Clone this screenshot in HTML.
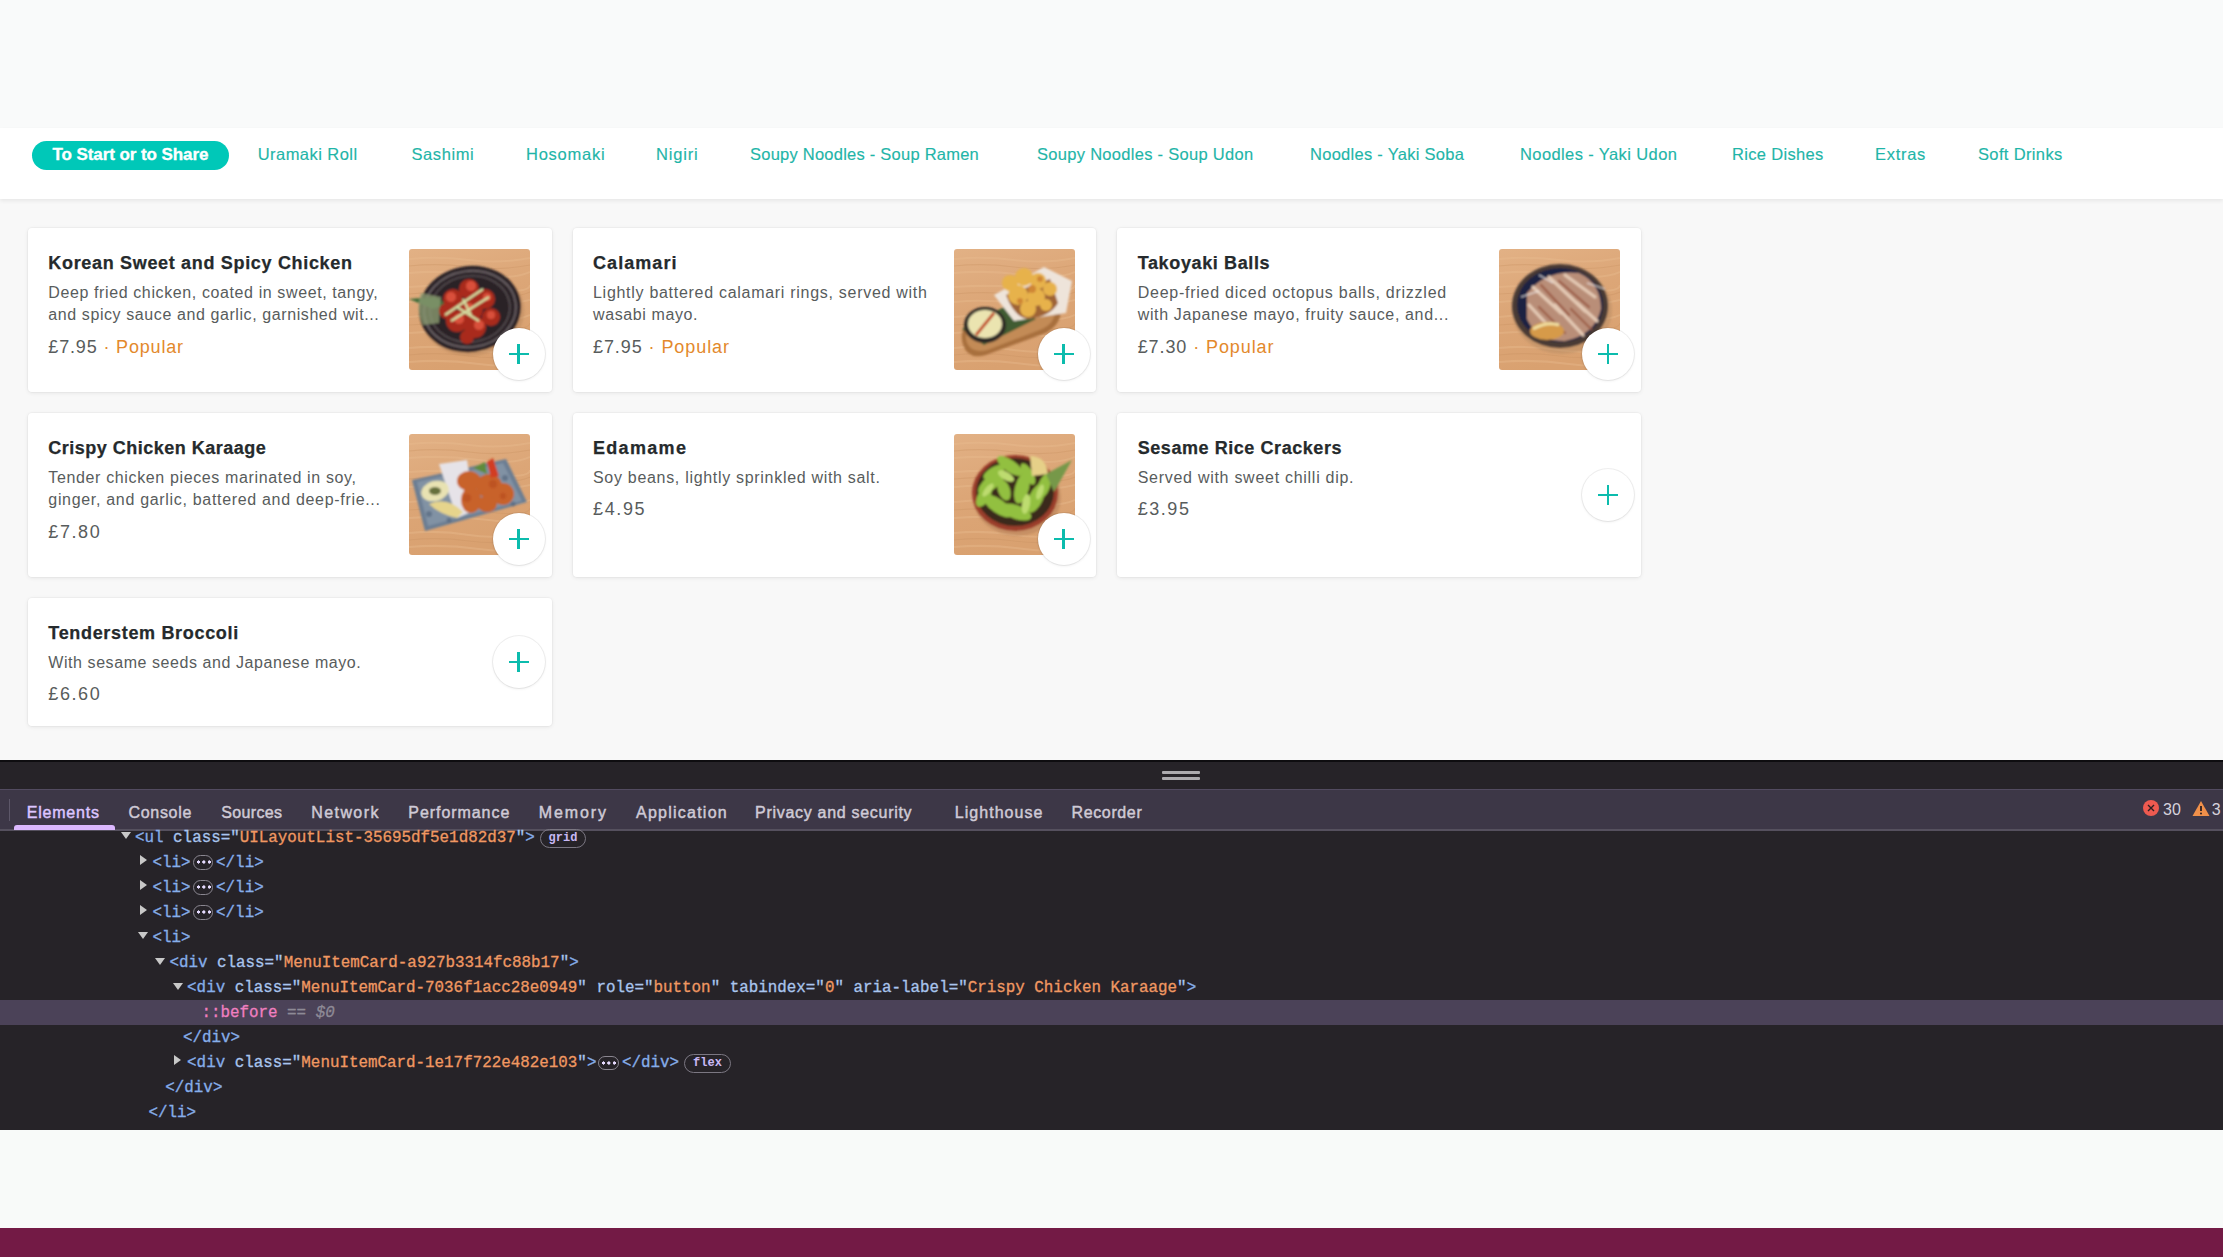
<!DOCTYPE html>
<html><head><meta charset="utf-8"><title>Menu</title>
<style>
html,body{margin:0;padding:0;}
body{width:2223px;height:1257px;overflow:hidden;position:relative;background:#f8f8f8;font-family:"Liberation Sans",sans-serif;}
.t{position:absolute;white-space:pre;}
.abs{position:absolute;}
.card{position:absolute;background:#fff;border-radius:4px;box-shadow:0 0 0 1px rgba(0,0,0,0.025),0 1px 4px rgba(0,0,0,0.08);}
.img{position:absolute;width:121px;height:121px;border-radius:3px;overflow:hidden;}
.plus{position:absolute;width:52px;height:52px;border-radius:50%;background:#fff;box-shadow:0 0 0 1px rgba(0,0,0,0.06),0 1px 3px rgba(0,0,0,0.08);}
.plus:before{content:"";position:absolute;left:16px;top:24.5px;width:20px;height:2.6px;background:#0cbcad;}
.plus:after{content:"";position:absolute;left:24.7px;top:15.7px;width:2.6px;height:20px;background:#0cbcad;}
.ell{display:inline-block;width:20.5px;height:14.5px;margin:0 3px 0 2px;vertical-align:-3px;border:1.3px solid #8a8690;border-radius:8px;box-sizing:border-box;-webkit-text-stroke:0;background:radial-gradient(circle at 4.5px 6px,#e6dbff 1.4px,transparent 1.8px),radial-gradient(circle at 9.9px 6px,#e6dbff 1.4px,transparent 1.8px),radial-gradient(circle at 15.3px 6px,#e6dbff 1.4px,transparent 1.8px);}
.badge{position:absolute;border:1.3px solid #7b7782;border-radius:10px;box-sizing:border-box;color:#c9b8f5;font:bold 12px/16px "Liberation Mono",monospace;text-align:center;}
.tri-d{position:absolute;width:0;height:0;border-left:5.7px solid transparent;border-right:5.7px solid transparent;border-top:7px solid #c8c8c8;}
.tri-r{position:absolute;width:0;height:0;border-top:5.7px solid transparent;border-bottom:5.7px solid transparent;border-left:7px solid #c8c8c8;}
</style></head><body>

<div class='abs' style='left:0;top:0;width:2223px;height:128px;background:#f9fafa'></div>
<div class='abs' style='left:0;top:128px;width:2223px;height:71px;background:#fff;box-shadow:0 2px 4px rgba(0,0,0,0.07)'></div>
<div class='abs' style='left:32px;top:140.5px;width:196.5px;height:29.5px;border-radius:15px;background:#00c8b8'></div>
<div class='card' style='left:28px;top:228px;width:523.6px;height:164px'></div>
<div class='img' style='left:409.1px;top:249.0px'><svg width='121' height='121' viewBox='0 0 121 121'><filter id='bla' x='-10%' y='-10%' width='120%' height='120%'><feGaussianBlur stdDeviation='0.9'/></filter><defs><linearGradient id='wga' x1='0' y1='0' x2='0.3' y2='1'><stop offset='0' stop-color='#e2b185'/><stop offset='0.5' stop-color='#dca677'/><stop offset='1' stop-color='#d9a170'/></linearGradient></defs>
<rect width='121' height='121' fill='url(#wga)'/>
<g stroke='#e8bb90' stroke-width='2' fill='none' opacity='0.4'>
<path d='M0 10 Q30 7 60 11 T121 9'/><path d='M0 24 Q35 21 70 26 T121 23'/><path d='M0 38 Q40 35 80 40 T121 36'/>
<path d='M0 53 Q30 50 60 54 T121 51'/><path d='M0 68 Q35 64 70 69 T121 66'/><path d='M0 84 Q40 81 80 86 T121 82'/>
<path d='M0 99 Q30 96 60 101 T121 97'/><path d='M0 113 Q35 110 70 115 T121 111'/>
</g>
<g stroke='#c99262' stroke-width='1.2' fill='none' opacity='0.35'>
<path d='M0 17 Q30 14 60 18 T121 16'/><path d='M0 45 Q35 42 70 46 T121 43'/><path d='M0 76 Q40 73 80 78 T121 74'/><path d='M0 106 Q30 103 60 107 T121 105'/>
</g><g filter='url(#bla)'>
<ellipse cx='63' cy='64' rx='52' ry='43' fill='#b5865a' opacity='0.45' transform='rotate(-8 61 60)'/>
<ellipse cx='61' cy='60' rx='51' ry='43' fill='#2a2427' transform='rotate(-8 61 60)'/>
<ellipse cx='61' cy='60' rx='46' ry='38' fill='none' stroke='#6a6165' stroke-width='1.8' transform='rotate(-8 61 60)'/>
<ellipse cx='61' cy='60' rx='40' ry='33' fill='none' stroke='#544b4f' stroke-width='1.6' transform='rotate(-8 61 60)'/>
<path d='M0 50 L26 48 L38 55 L24 60 Z' fill='#3a6a38'/>
<path d='M12 44 Q6 60 14 76 L30 74 L32 48 Z' fill='#8a9870' opacity='0.8'/>
<g fill='#a92b1e'><circle cx='44' cy='50' r='10'/><circle cx='60' cy='40' r='10'/><circle cx='76' cy='50' r='10'/>
<circle cx='48' cy='72' r='11'/><circle cx='66' cy='78' r='11'/><circle cx='38' cy='62' r='8'/><circle cx='82' cy='68' r='9'/><circle cx='62' cy='60' r='12'/><circle cx='58' cy='88' r='7'/></g>
<g fill='#d9503a'><circle cx='42' cy='48' r='5'/><circle cx='62' cy='37' r='5'/><circle cx='50' cy='70' r='5'/><circle cx='70' cy='76' r='5'/><circle cx='78' cy='48' r='4'/><circle cx='82' cy='66' r='4'/><circle cx='60' cy='58' r='4'/></g>
<g stroke='#d3dea2' stroke-width='2.3'><path d='M36 66 L74 40'/><path d='M42 72 L80 48'/><path d='M48 58 L70 72'/><path d='M54 50 L62 66'/></g>
</g></svg></div>
<div class='plus' style='left:492.8px;top:328.0px'></div>
<div class='card' style='left:572.7px;top:228px;width:523.6px;height:164px'></div>
<div class='img' style='left:953.8px;top:249.0px'><svg width='121' height='121' viewBox='0 0 121 121'><filter id='blb' x='-10%' y='-10%' width='120%' height='120%'><feGaussianBlur stdDeviation='0.9'/></filter><defs><linearGradient id='wgb' x1='0' y1='0' x2='0.3' y2='1'><stop offset='0' stop-color='#e2b185'/><stop offset='0.5' stop-color='#dca677'/><stop offset='1' stop-color='#d9a170'/></linearGradient></defs>
<rect width='121' height='121' fill='url(#wgb)'/>
<g stroke='#e8bb90' stroke-width='2' fill='none' opacity='0.4'>
<path d='M0 10 Q30 7 60 11 T121 9'/><path d='M0 24 Q35 21 70 26 T121 23'/><path d='M0 38 Q40 35 80 40 T121 36'/>
<path d='M0 53 Q30 50 60 54 T121 51'/><path d='M0 68 Q35 64 70 69 T121 66'/><path d='M0 84 Q40 81 80 86 T121 82'/>
<path d='M0 99 Q30 96 60 101 T121 97'/><path d='M0 113 Q35 110 70 115 T121 111'/>
</g>
<g stroke='#c99262' stroke-width='1.2' fill='none' opacity='0.35'>
<path d='M0 17 Q30 14 60 18 T121 16'/><path d='M0 45 Q35 42 70 46 T121 43'/><path d='M0 76 Q40 73 80 78 T121 74'/><path d='M0 106 Q30 103 60 107 T121 105'/>
</g><g filter='url(#blb)'>
<path d='M8 92 Q4 74 22 66 L88 54 Q104 52 108 64 Q108 78 92 86 L30 104 Q12 108 8 92 Z' fill='#a86f3e' transform='rotate(-4 60 80)'/>
<path d='M12 90 Q9 76 24 70 L86 58 Q100 57 102 66 Q101 77 88 82 L32 99 Q16 102 12 90 Z' fill='#c38b56' transform='rotate(-4 60 80)'/>
<path d='M8 80 L50 58 L82 70 L30 96 Z' fill='#3f5c30'/>
<ellipse cx='31' cy='76' rx='21' ry='18' fill='#2e2926'/>
<ellipse cx='31' cy='75' rx='17' ry='14' fill='#ebe4b0'/>
<path d='M22 86 L40 64' stroke='#c2512c' stroke-width='3'/>
<path d='M40 46 L90 18 L118 32 L112 64 L60 72 Z' fill='#eee4da'/>
<path d='M52 46 Q60 68 74 70 Q96 68 104 54 L96 30 Z' fill='#9f6336'/>
<g fill='#e7b24c'><circle cx='56' cy='34' r='8'/><circle cx='70' cy='28' r='9'/><circle cx='84' cy='32' r='8'/>
<circle cx='64' cy='46' r='10'/><circle cx='82' cy='48' r='9'/><circle cx='96' cy='40' r='7'/><circle cx='74' cy='60' r='8'/><circle cx='92' cy='56' r='6'/></g>
<g fill='#cf8636'><circle cx='78' cy='40' r='4'/><circle cx='66' cy='52' r='3'/><circle cx='86' cy='30' r='3'/></g>
</g></svg></div>
<div class='plus' style='left:1037.5px;top:328.0px'></div>
<div class='card' style='left:1117.4px;top:228px;width:523.6px;height:164px'></div>
<div class='img' style='left:1498.5px;top:249.0px'><svg width='121' height='121' viewBox='0 0 121 121'><filter id='blc' x='-10%' y='-10%' width='120%' height='120%'><feGaussianBlur stdDeviation='0.9'/></filter><defs><linearGradient id='wgc' x1='0' y1='0' x2='0.3' y2='1'><stop offset='0' stop-color='#e2b185'/><stop offset='0.5' stop-color='#dca677'/><stop offset='1' stop-color='#d9a170'/></linearGradient></defs>
<rect width='121' height='121' fill='url(#wgc)'/>
<g stroke='#e8bb90' stroke-width='2' fill='none' opacity='0.4'>
<path d='M0 10 Q30 7 60 11 T121 9'/><path d='M0 24 Q35 21 70 26 T121 23'/><path d='M0 38 Q40 35 80 40 T121 36'/>
<path d='M0 53 Q30 50 60 54 T121 51'/><path d='M0 68 Q35 64 70 69 T121 66'/><path d='M0 84 Q40 81 80 86 T121 82'/>
<path d='M0 99 Q30 96 60 101 T121 97'/><path d='M0 113 Q35 110 70 115 T121 111'/>
</g>
<g stroke='#c99262' stroke-width='1.2' fill='none' opacity='0.35'>
<path d='M0 17 Q30 14 60 18 T121 16'/><path d='M0 45 Q35 42 70 46 T121 43'/><path d='M0 76 Q40 73 80 78 T121 74'/><path d='M0 106 Q30 103 60 107 T121 105'/>
</g><g filter='url(#blc)'>
<ellipse cx='63' cy='61' rx='50' ry='44' fill='#b48a62' opacity='0.45'/>
<ellipse cx='61' cy='57' rx='48' ry='42' fill='#4a3a34'/>
<ellipse cx='61' cy='56' rx='43' ry='37' fill='#1c2142'/>
<path d='M28 44 Q48 20 80 24 Q102 34 102 60 Q96 86 66 92 Q38 92 28 70 Z' fill='#b98e78'/>
<g stroke='#e4c9b4' stroke-width='3.2' fill='none' stroke-linecap='round'>
<path d='M34 38 L62 64'/><path d='M50 28 L86 62'/><path d='M66 26 L96 48'/><path d='M30 56 L56 84'/><path d='M56 56 L84 86'/><path d='M78 54 L98 72'/></g>
<g stroke='#9c5c46' stroke-width='2.2' fill='none' stroke-linecap='round'>
<path d='M42 36 L70 66'/><path d='M60 32 L90 58'/><path d='M40 58 L66 84'/><path d='M72 60 L92 80'/></g>
<g stroke='#f2eeee' stroke-width='1.3' fill='none' opacity='0.85'><path d='M22 48 L40 42'/><path d='M88 34 L106 40'/><path d='M40 26 L54 34'/></g>
<ellipse cx='48' cy='82' rx='17' ry='9' fill='#d69a4a'/>
<path d='M34 80 Q48 72 60 76' stroke='#f0dea0' stroke-width='3' fill='none'/>
</g></svg></div>
<div class='plus' style='left:1582.2px;top:328.0px'></div>
<div class='card' style='left:28px;top:413px;width:523.6px;height:164px'></div>
<div class='img' style='left:409.1px;top:434.0px'><svg width='121' height='121' viewBox='0 0 121 121'><filter id='bld' x='-10%' y='-10%' width='120%' height='120%'><feGaussianBlur stdDeviation='0.9'/></filter><defs><linearGradient id='wgd' x1='0' y1='0' x2='0.3' y2='1'><stop offset='0' stop-color='#e2b185'/><stop offset='0.5' stop-color='#dca677'/><stop offset='1' stop-color='#d9a170'/></linearGradient></defs>
<rect width='121' height='121' fill='url(#wgd)'/>
<g stroke='#e8bb90' stroke-width='2' fill='none' opacity='0.4'>
<path d='M0 10 Q30 7 60 11 T121 9'/><path d='M0 24 Q35 21 70 26 T121 23'/><path d='M0 38 Q40 35 80 40 T121 36'/>
<path d='M0 53 Q30 50 60 54 T121 51'/><path d='M0 68 Q35 64 70 69 T121 66'/><path d='M0 84 Q40 81 80 86 T121 82'/>
<path d='M0 99 Q30 96 60 101 T121 97'/><path d='M0 113 Q35 110 70 115 T121 111'/>
</g>
<g stroke='#c99262' stroke-width='1.2' fill='none' opacity='0.35'>
<path d='M0 17 Q30 14 60 18 T121 16'/><path d='M0 45 Q35 42 70 46 T121 43'/><path d='M0 76 Q40 73 80 78 T121 74'/><path d='M0 106 Q30 103 60 107 T121 105'/>
</g><g filter='url(#bld)'>
<path d='M3 46 L97 25 L118 68 L16 97 Z' fill='#6c7e93'/>
<path d='M8 48 L94 29 L113 67 L19 92 Z' fill='#93a3b2' opacity='0.55'/>
<g fill='#4f6078' opacity='0.6'><circle cx='20' cy='80' r='3'/><circle cx='40' cy='86' r='2.5'/><circle cx='96' cy='44' r='3'/><circle cx='104' cy='70' r='2.5'/><circle cx='14' cy='56' r='2'/></g>
<path d='M30 30 L58 26 L66 76 L48 84 Z' fill='#e6e3e8'/>
<ellipse cx='26' cy='57' rx='14' ry='10' fill='#e8e2b2' transform='rotate(-15 26 57)'/>
<ellipse cx='26' cy='57' rx='6' ry='4' fill='#66703e'/>
<path d='M20 70 Q38 62 54 78 L48 84 Q30 80 20 70 Z' fill='#e6d48c'/>
<g fill='#c8622a'><ellipse cx='60' cy='47' rx='12' ry='10'/><ellipse cx='62' cy='66' rx='10' ry='13'/>
<ellipse cx='80' cy='52' rx='13' ry='12'/><ellipse cx='94' cy='60' rx='11' ry='11'/><ellipse cx='78' cy='70' rx='10' ry='8'/></g>
<g fill='#bd5220'><circle cx='58' cy='64' r='4'/><circle cx='84' cy='50' r='4'/><circle cx='94' cy='62' r='3'/></g>
<path d='M64 34 L76 28 L78 40 Z' fill='#5e8a3a'/><path d='M78 28 L84 24 L90 42 L82 44 Z' fill='#d23c22'/>
</g></svg></div>
<div class='plus' style='left:492.8px;top:513.0px'></div>
<div class='card' style='left:572.7px;top:413px;width:523.6px;height:164px'></div>
<div class='img' style='left:953.8px;top:434.0px'><svg width='121' height='121' viewBox='0 0 121 121'><filter id='ble' x='-10%' y='-10%' width='120%' height='120%'><feGaussianBlur stdDeviation='0.9'/></filter><defs><linearGradient id='wge' x1='0' y1='0' x2='0.3' y2='1'><stop offset='0' stop-color='#e2b185'/><stop offset='0.5' stop-color='#dca677'/><stop offset='1' stop-color='#d9a170'/></linearGradient></defs>
<rect width='121' height='121' fill='url(#wge)'/>
<g stroke='#e8bb90' stroke-width='2' fill='none' opacity='0.4'>
<path d='M0 10 Q30 7 60 11 T121 9'/><path d='M0 24 Q35 21 70 26 T121 23'/><path d='M0 38 Q40 35 80 40 T121 36'/>
<path d='M0 53 Q30 50 60 54 T121 51'/><path d='M0 68 Q35 64 70 69 T121 66'/><path d='M0 84 Q40 81 80 86 T121 82'/>
<path d='M0 99 Q30 96 60 101 T121 97'/><path d='M0 113 Q35 110 70 115 T121 111'/>
</g>
<g stroke='#c99262' stroke-width='1.2' fill='none' opacity='0.35'>
<path d='M0 17 Q30 14 60 18 T121 16'/><path d='M0 45 Q35 42 70 46 T121 43'/><path d='M0 76 Q40 73 80 78 T121 74'/><path d='M0 106 Q30 103 60 107 T121 105'/>
</g><g filter='url(#ble)'>
<ellipse cx='63' cy='63' rx='44' ry='39' fill='#b07a52' opacity='0.45'/>
<ellipse cx='61' cy='59' rx='43' ry='38' fill='#9a3c2c'/>
<ellipse cx='61' cy='58' rx='39' ry='34' fill='#3b2b1b'/>
<g fill='#92c040'><ellipse cx='38' cy='48' rx='7' ry='17' transform='rotate(50 38 48)'/>
<ellipse cx='56' cy='32' rx='6' ry='15' transform='rotate(-55 56 32)'/><ellipse cx='68' cy='54' rx='7' ry='16' transform='rotate(15 68 54)'/>
<ellipse cx='44' cy='72' rx='7' ry='17' transform='rotate(-55 44 72)'/><ellipse cx='82' cy='64' rx='7' ry='16' transform='rotate(25 82 64)'/>
<ellipse cx='62' cy='78' rx='7' ry='16' transform='rotate(-70 62 78)'/><ellipse cx='90' cy='52' rx='6' ry='13' transform='rotate(20 90 52)'/>
<ellipse cx='50' cy='56' rx='6' ry='11' transform='rotate(-20 50 56)'/><ellipse cx='30' cy='62' rx='6' ry='12' transform='rotate(30 30 62)'/>
<ellipse cx='40' cy='38' rx='5' ry='12' transform='rotate(60 40 38)'/><ellipse cx='74' cy='40' rx='5' ry='12' transform='rotate(-30 74 40)'/></g>
<g fill='#bddc70'><ellipse cx='72' cy='70' rx='4' ry='10' transform='rotate(10 72 70)'/><ellipse cx='52' cy='42' rx='4' ry='9' transform='rotate(-60 52 42)'/><ellipse cx='34' cy='56' rx='3' ry='8' transform='rotate(40 34 56)'/><ellipse cx='86' cy='58' rx='3' ry='8' transform='rotate(20 86 58)'/></g>
<path d='M76 22 Q92 22 94 40 L78 42 Z' fill='#e6d088'/>
<path d='M92 40 L118 26 L100 58 Z' fill='#76984a'/>
</g></svg></div>
<div class='plus' style='left:1037.5px;top:513.0px'></div>
<div class='card' style='left:1117.4px;top:413px;width:523.6px;height:164px'></div>
<div class='plus' style='left:1582.2px;top:469.0px'></div>
<div class='card' style='left:28px;top:598px;width:523.6px;height:128px'></div>
<div class='plus' style='left:492.8px;top:636.0px'></div>
<div class='abs' style='left:0;top:760px;width:2223px;height:370px;background:#262328'></div>
<div class='abs' style='left:0;top:760px;width:2223px;height:1.5px;background:#0e0d10'></div>
<div class='abs' style='left:1162px;top:771.3px;width:38px;height:2.8px;background:#acaaae;border-radius:1px'></div>
<div class='abs' style='left:1162px;top:777.2px;width:38px;height:2.8px;background:#acaaae;border-radius:1px'></div>
<div class='abs' style='left:0;top:789px;width:2223px;height:41px;background:#3d3747;border-top:1.5px solid #524b60;box-sizing:border-box'></div>
<div class='abs' style='left:0;top:829px;width:2223px;height:1.5px;background:#55505e'></div>
<div class='abs' style='left:9px;top:799px;width:1px;height:22px;background:#5d5769'></div>
<div class='abs' style='left:14px;top:824.5px;width:101px;height:5px;background:#dcb8ff;border-radius:3px 3px 0 0'></div>
<div class='abs' style='left:2142.5px;top:800px;width:16px;height:16px;border-radius:50%;background:#ee5a50'></div>
<svg class='abs' style='left:2142.5px;top:800px' width='16' height='16'><path d='M5 5 L11 11 M11 5 L5 11' stroke='#2a1f22' stroke-width='1.4'/></svg>
<svg class='abs' style='left:2192px;top:800px' width='18' height='17'><path d='M9 1 L17.5 16 L0.5 16 Z' fill='#f0904a'/><path d='M9 6 L9 11' stroke='#2a1f22' stroke-width='1.8'/><circle cx='9' cy='13.4' r='1' fill='#2a1f22'/></svg>
<div class='abs' style='left:0;top:999.5px;width:2223px;height:25px;background:#4b4258'></div>
<div class='tri-d' style='left:120.5px;top:832.0px'></div>
<div class='tri-r' style='left:140px;top:854.8px'></div>
<div class='tri-r' style='left:140px;top:879.8px'></div>
<div class='tri-r' style='left:140px;top:904.8px'></div>
<div class='tri-d' style='left:138px;top:932.0px'></div>
<div class='tri-d' style='left:155px;top:957.5px'></div>
<div class='tri-d' style='left:172.7px;top:982.5px'></div>
<div class='tri-r' style='left:174px;top:1055.3px'></div>
<div class='badge' style='left:540px;top:828.5px;width:46px;height:19px'>grid</div>
<div class='badge' style='left:684px;top:1053.5px;width:47px;height:19px'>flex</div>
<div class='abs' style='left:0;top:1130px;width:2223px;height:98px;background:#f8faf9'></div>
<div class='abs' style='left:0;top:1228px;width:2223px;height:29px;background:#731a45'></div>
<div class='t' id='t0' style='left:257.7px;top:144.38px;font:400 16.5px/21px "Liberation Sans", sans-serif;color:#1fb5a8;letter-spacing:0.458px;-webkit-text-stroke:0.15px currentColor;'>Uramaki Roll</div>
<div class='t' id='t1' style='left:411.5px;top:144.38px;font:400 16.5px/21px "Liberation Sans", sans-serif;color:#1fb5a8;letter-spacing:0.580px;-webkit-text-stroke:0.15px currentColor;'>Sashimi</div>
<div class='t' id='t2' style='left:526.0px;top:144.38px;font:400 16.5px/21px "Liberation Sans", sans-serif;color:#1fb5a8;letter-spacing:0.759px;-webkit-text-stroke:0.15px currentColor;'>Hosomaki</div>
<div class='t' id='t3' style='left:656.0px;top:144.38px;font:400 16.5px/21px "Liberation Sans", sans-serif;color:#1fb5a8;letter-spacing:0.816px;-webkit-text-stroke:0.15px currentColor;'>Nigiri</div>
<div class='t' id='t4' style='left:750.0px;top:144.38px;font:400 16.5px/21px "Liberation Sans", sans-serif;color:#1fb5a8;letter-spacing:0.236px;-webkit-text-stroke:0.15px currentColor;'>Soupy Noodles - Soup Ramen</div>
<div class='t' id='t5' style='left:1037.0px;top:144.38px;font:400 16.5px/21px "Liberation Sans", sans-serif;color:#1fb5a8;letter-spacing:0.293px;-webkit-text-stroke:0.15px currentColor;'>Soupy Noodles - Soup Udon</div>
<div class='t' id='t6' style='left:1310.0px;top:144.38px;font:400 16.5px/21px "Liberation Sans", sans-serif;color:#1fb5a8;letter-spacing:0.277px;-webkit-text-stroke:0.15px currentColor;'>Noodles - Yaki Soba</div>
<div class='t' id='t7' style='left:1520.0px;top:144.38px;font:400 16.5px/21px "Liberation Sans", sans-serif;color:#1fb5a8;letter-spacing:0.393px;-webkit-text-stroke:0.15px currentColor;'>Noodles - Yaki Udon</div>
<div class='t' id='t8' style='left:1732.0px;top:144.38px;font:400 16.5px/21px "Liberation Sans", sans-serif;color:#1fb5a8;letter-spacing:0.322px;-webkit-text-stroke:0.15px currentColor;'>Rice Dishes</div>
<div class='t' id='t9' style='left:1875.0px;top:144.38px;font:400 16.5px/21px "Liberation Sans", sans-serif;color:#1fb5a8;letter-spacing:0.698px;-webkit-text-stroke:0.15px currentColor;'>Extras</div>
<div class='t' id='t10' style='left:1978.0px;top:144.38px;font:400 16.5px/21px "Liberation Sans", sans-serif;color:#1fb5a8;letter-spacing:0.356px;-webkit-text-stroke:0.15px currentColor;'>Soft Drinks</div>
<div class='t' id='t11' style='left:52.5px;top:143.71px;font:700 17px/22px "Liberation Sans", sans-serif;color:#ffffff;letter-spacing:-0.077px;-webkit-text-stroke:0.35px currentColor;'>To Start or to Share</div>
<div class='t' id='t12' style='left:48.3px;top:252.16px;font:700 18px/23px "Liberation Sans", sans-serif;color:#252a2c;letter-spacing:0.676px;-webkit-text-stroke:0.25px currentColor;'>Korean Sweet and Spicy Chicken</div>
<div class='t' id='t13' style='left:48.3px;top:281.75px;font:400 16px/21px "Liberation Sans", sans-serif;color:#585c5c;letter-spacing:0.609px;'>Deep fried chicken, coated in sweet, tangy,</div>
<div class='t' id='t14' style='left:48.3px;top:303.95px;font:400 16px/21px "Liberation Sans", sans-serif;color:#585c5c;letter-spacing:0.590px;'>and spicy sauce and garlic, garnished wit...</div>
<div class='t' id='t15' style='left:48.3px;top:335.56px;font:400 18px/23px "Liberation Sans", sans-serif;color:#585c5c;letter-spacing:0.837px;'>£7.95 <span style='color:#e3892c'>· Popular</span></div>
<div class='t' id='t16' style='left:593.0px;top:252.16px;font:700 18px/23px "Liberation Sans", sans-serif;color:#252a2c;letter-spacing:1.065px;-webkit-text-stroke:0.25px currentColor;'>Calamari</div>
<div class='t' id='t17' style='left:593.0px;top:281.75px;font:400 16px/21px "Liberation Sans", sans-serif;color:#585c5c;letter-spacing:0.713px;'>Lightly battered calamari rings, served with</div>
<div class='t' id='t18' style='left:593.0px;top:303.95px;font:400 16px/21px "Liberation Sans", sans-serif;color:#585c5c;letter-spacing:0.611px;'>wasabi mayo.</div>
<div class='t' id='t19' style='left:593.0px;top:335.56px;font:400 18px/23px "Liberation Sans", sans-serif;color:#585c5c;letter-spacing:0.922px;'>£7.95 <span style='color:#e3892c'>· Popular</span></div>
<div class='t' id='t20' style='left:1137.7px;top:252.16px;font:700 18px/23px "Liberation Sans", sans-serif;color:#252a2c;letter-spacing:0.629px;-webkit-text-stroke:0.25px currentColor;'>Takoyaki Balls</div>
<div class='t' id='t21' style='left:1137.7px;top:281.75px;font:400 16px/21px "Liberation Sans", sans-serif;color:#585c5c;letter-spacing:0.750px;'>Deep-fried diced octopus balls, drizzled</div>
<div class='t' id='t22' style='left:1137.7px;top:303.95px;font:400 16px/21px "Liberation Sans", sans-serif;color:#585c5c;letter-spacing:0.645px;'>with Japanese mayo, fruity sauce, and...</div>
<div class='t' id='t23' style='left:1137.7px;top:335.56px;font:400 18px/23px "Liberation Sans", sans-serif;color:#585c5c;letter-spacing:0.908px;'>£7.30 <span style='color:#e3892c'>· Popular</span></div>
<div class='t' id='t24' style='left:48.3px;top:437.16px;font:700 18px/23px "Liberation Sans", sans-serif;color:#252a2c;letter-spacing:0.496px;-webkit-text-stroke:0.25px currentColor;'>Crispy Chicken Karaage</div>
<div class='t' id='t25' style='left:48.3px;top:466.75px;font:400 16px/21px "Liberation Sans", sans-serif;color:#585c5c;letter-spacing:0.638px;'>Tender chicken pieces marinated in soy,</div>
<div class='t' id='t26' style='left:48.3px;top:488.95px;font:400 16px/21px "Liberation Sans", sans-serif;color:#585c5c;letter-spacing:0.684px;'>ginger, and garlic, battered and deep-frie...</div>
<div class='t' id='t27' style='left:48.3px;top:520.56px;font:400 18px/23px "Liberation Sans", sans-serif;color:#585c5c;letter-spacing:1.592px;'>£7.80</div>
<div class='t' id='t28' style='left:593.0px;top:437.16px;font:700 18px/23px "Liberation Sans", sans-serif;color:#252a2c;letter-spacing:1.311px;-webkit-text-stroke:0.25px currentColor;'>Edamame</div>
<div class='t' id='t29' style='left:593.0px;top:466.75px;font:400 16px/21px "Liberation Sans", sans-serif;color:#585c5c;letter-spacing:0.694px;'>Soy beans, lightly sprinkled with salt.</div>
<div class='t' id='t30' style='left:593.0px;top:498.36px;font:400 18px/23px "Liberation Sans", sans-serif;color:#585c5c;letter-spacing:1.642px;'>£4.95</div>
<div class='t' id='t31' style='left:1137.7px;top:437.16px;font:700 18px/23px "Liberation Sans", sans-serif;color:#252a2c;letter-spacing:0.562px;-webkit-text-stroke:0.25px currentColor;'>Sesame Rice Crackers</div>
<div class='t' id='t32' style='left:1137.7px;top:466.75px;font:400 16px/21px "Liberation Sans", sans-serif;color:#585c5c;letter-spacing:0.722px;'>Served with sweet chilli dip.</div>
<div class='t' id='t33' style='left:1137.7px;top:498.36px;font:400 18px/23px "Liberation Sans", sans-serif;color:#585c5c;letter-spacing:1.542px;'>£3.95</div>
<div class='t' id='t34' style='left:48.3px;top:622.16px;font:700 18px/23px "Liberation Sans", sans-serif;color:#252a2c;letter-spacing:0.677px;-webkit-text-stroke:0.25px currentColor;'>Tenderstem Broccoli</div>
<div class='t' id='t35' style='left:48.3px;top:651.75px;font:400 16px/21px "Liberation Sans", sans-serif;color:#585c5c;letter-spacing:0.567px;'>With sesame seeds and Japanese mayo.</div>
<div class='t' id='t36' style='left:48.3px;top:683.36px;font:400 18px/23px "Liberation Sans", sans-serif;color:#585c5c;letter-spacing:1.592px;'>£6.60</div>
<div class='t' id='t37' style='left:26.7px;top:801.95px;font:400 16px/21px "Liberation Sans", sans-serif;color:#dcc5ff;letter-spacing:0.786px;-webkit-text-stroke:0.45px currentColor;'>Elements</div>
<div class='t' id='t38' style='left:128.5px;top:801.95px;font:400 16px/21px "Liberation Sans", sans-serif;color:#cfcad6;letter-spacing:0.683px;-webkit-text-stroke:0.45px currentColor;'>Console</div>
<div class='t' id='t39' style='left:221.3px;top:801.95px;font:400 16px/21px "Liberation Sans", sans-serif;color:#cfcad6;letter-spacing:0.351px;-webkit-text-stroke:0.45px currentColor;'>Sources</div>
<div class='t' id='t40' style='left:311.3px;top:801.95px;font:400 16px/21px "Liberation Sans", sans-serif;color:#cfcad6;letter-spacing:1.403px;-webkit-text-stroke:0.45px currentColor;'>Network</div>
<div class='t' id='t41' style='left:408.3px;top:801.95px;font:400 16px/21px "Liberation Sans", sans-serif;color:#cfcad6;letter-spacing:0.940px;-webkit-text-stroke:0.45px currentColor;'>Performance</div>
<div class='t' id='t42' style='left:538.7px;top:801.95px;font:400 16px/21px "Liberation Sans", sans-serif;color:#cfcad6;letter-spacing:1.924px;-webkit-text-stroke:0.45px currentColor;'>Memory</div>
<div class='t' id='t43' style='left:636.0px;top:801.95px;font:400 16px/21px "Liberation Sans", sans-serif;color:#cfcad6;letter-spacing:1.242px;-webkit-text-stroke:0.45px currentColor;'>Application</div>
<div class='t' id='t44' style='left:755.0px;top:801.95px;font:400 16px/21px "Liberation Sans", sans-serif;color:#cfcad6;letter-spacing:0.707px;-webkit-text-stroke:0.45px currentColor;'>Privacy and security</div>
<div class='t' id='t45' style='left:954.7px;top:801.95px;font:400 16px/21px "Liberation Sans", sans-serif;color:#cfcad6;letter-spacing:1.057px;-webkit-text-stroke:0.45px currentColor;'>Lighthouse</div>
<div class='t' id='t46' style='left:1071.5px;top:801.95px;font:400 16px/21px "Liberation Sans", sans-serif;color:#cfcad6;letter-spacing:0.632px;-webkit-text-stroke:0.45px currentColor;'>Recorder</div>
<div class='t' id='t47' style='left:2163.0px;top:799.35px;font:400 16px/21px "Liberation Sans", sans-serif;color:#d6d2dc;letter-spacing:0.102px;'>30</div>
<div class='t' id='t48' style='left:2211.8px;top:799.35px;font:400 16px/21px "Liberation Sans", sans-serif;color:#d6d2dc;letter-spacing:0.000px;'>3</div>
<div class='t' id='t49' style='left:135.0px;top:827.78px;font:400 15.87px/21px "Liberation Mono", monospace;color:#86aeea;letter-spacing:0.000px;-webkit-text-stroke:0.3px currentColor;'><span style='color:#86aeea'>&lt;ul</span> <span style='color:#a9c5ee'>class=</span><span style='color:#a9c5ee'>&quot;</span><span style='color:#f09862'>UILayoutList-35695df5e1d82d37</span><span style='color:#a9c5ee'>&quot;</span><span style='color:#86aeea'>&gt;</span></div>
<div class='t' id='t50' style='left:152.5px;top:852.83px;font:400 15.87px/21px "Liberation Mono", monospace;color:#86aeea;letter-spacing:0.000px;-webkit-text-stroke:0.3px currentColor;'><span style='color:#86aeea'>&lt;li&gt;</span><span class="ell"></span><span style='color:#86aeea'>&lt;/li&gt;</span></div>
<div class='t' id='t51' style='left:152.5px;top:877.88px;font:400 15.87px/21px "Liberation Mono", monospace;color:#86aeea;letter-spacing:0.000px;-webkit-text-stroke:0.3px currentColor;'><span style='color:#86aeea'>&lt;li&gt;</span><span class="ell"></span><span style='color:#86aeea'>&lt;/li&gt;</span></div>
<div class='t' id='t52' style='left:152.5px;top:902.93px;font:400 15.87px/21px "Liberation Mono", monospace;color:#86aeea;letter-spacing:0.000px;-webkit-text-stroke:0.3px currentColor;'><span style='color:#86aeea'>&lt;li&gt;</span><span class="ell"></span><span style='color:#86aeea'>&lt;/li&gt;</span></div>
<div class='t' id='t53' style='left:152.5px;top:927.98px;font:400 15.87px/21px "Liberation Mono", monospace;color:#86aeea;letter-spacing:0.000px;-webkit-text-stroke:0.3px currentColor;'><span style='color:#86aeea'>&lt;li&gt;</span></div>
<div class='t' id='t54' style='left:169.4px;top:953.03px;font:400 15.87px/21px "Liberation Mono", monospace;color:#86aeea;letter-spacing:0.000px;-webkit-text-stroke:0.3px currentColor;'><span style='color:#86aeea'>&lt;div</span> <span style='color:#a9c5ee'>class=</span><span style='color:#a9c5ee'>&quot;</span><span style='color:#f09862'>MenuItemCard-a927b3314fc88b17</span><span style='color:#a9c5ee'>&quot;</span><span style='color:#86aeea'>&gt;</span></div>
<div class='t' id='t55' style='left:187.1px;top:978.08px;font:400 15.87px/21px "Liberation Mono", monospace;color:#86aeea;letter-spacing:0.000px;-webkit-text-stroke:0.3px currentColor;'><span style='color:#86aeea'>&lt;div</span> <span style='color:#a9c5ee'>class=</span><span style='color:#a9c5ee'>&quot;</span><span style='color:#f09862'>MenuItemCard-7036f1acc28e0949</span><span style='color:#a9c5ee'>&quot;</span> <span style='color:#a9c5ee'>role=</span><span style='color:#a9c5ee'>&quot;</span><span style='color:#f09862'>button</span><span style='color:#a9c5ee'>&quot;</span> <span style='color:#a9c5ee'>tabindex=</span><span style='color:#a9c5ee'>&quot;</span><span style='color:#f09862'>0</span><span style='color:#a9c5ee'>&quot;</span> <span style='color:#a9c5ee'>aria-label=</span><span style='color:#a9c5ee'>&quot;</span><span style='color:#f09862'>Crispy Chicken Karaage</span><span style='color:#a9c5ee'>&quot;</span><span style='color:#86aeea'>&gt;</span></div>
<div class='t' id='t56' style='left:201.4px;top:1003.13px;font:400 15.87px/21px "Liberation Mono", monospace;color:#86aeea;letter-spacing:0.000px;-webkit-text-stroke:0.3px currentColor;'><span style='color:#f07fc0'>::before</span> <span style='color:#8e8a96'>==</span> <span style='color:#8e8a96;font-style:italic'>$0</span></div>
<div class='t' id='t57' style='left:183.0px;top:1028.18px;font:400 15.87px/21px "Liberation Mono", monospace;color:#86aeea;letter-spacing:0.000px;-webkit-text-stroke:0.3px currentColor;'><span style='color:#86aeea'>&lt;/div&gt;</span></div>
<div class='t' id='t58' style='left:187.1px;top:1053.23px;font:400 15.87px/21px "Liberation Mono", monospace;color:#86aeea;letter-spacing:0.000px;-webkit-text-stroke:0.3px currentColor;'><span style='color:#86aeea'>&lt;div</span> <span style='color:#a9c5ee'>class=</span><span style='color:#a9c5ee'>&quot;</span><span style='color:#f09862'>MenuItemCard-1e17f722e482e103</span><span style='color:#a9c5ee'>&quot;</span><span style='color:#86aeea'>&gt;</span><span class="ell"></span><span style='color:#86aeea'>&lt;/div&gt;</span></div>
<div class='t' id='t59' style='left:165.3px;top:1078.28px;font:400 15.87px/21px "Liberation Mono", monospace;color:#86aeea;letter-spacing:0.000px;-webkit-text-stroke:0.3px currentColor;'><span style='color:#86aeea'>&lt;/div&gt;</span></div>
<div class='t' id='t60' style='left:148.4px;top:1103.33px;font:400 15.87px/21px "Liberation Mono", monospace;color:#86aeea;letter-spacing:0.000px;-webkit-text-stroke:0.3px currentColor;'><span style='color:#86aeea'>&lt;/li&gt;</span></div>
</body></html>
